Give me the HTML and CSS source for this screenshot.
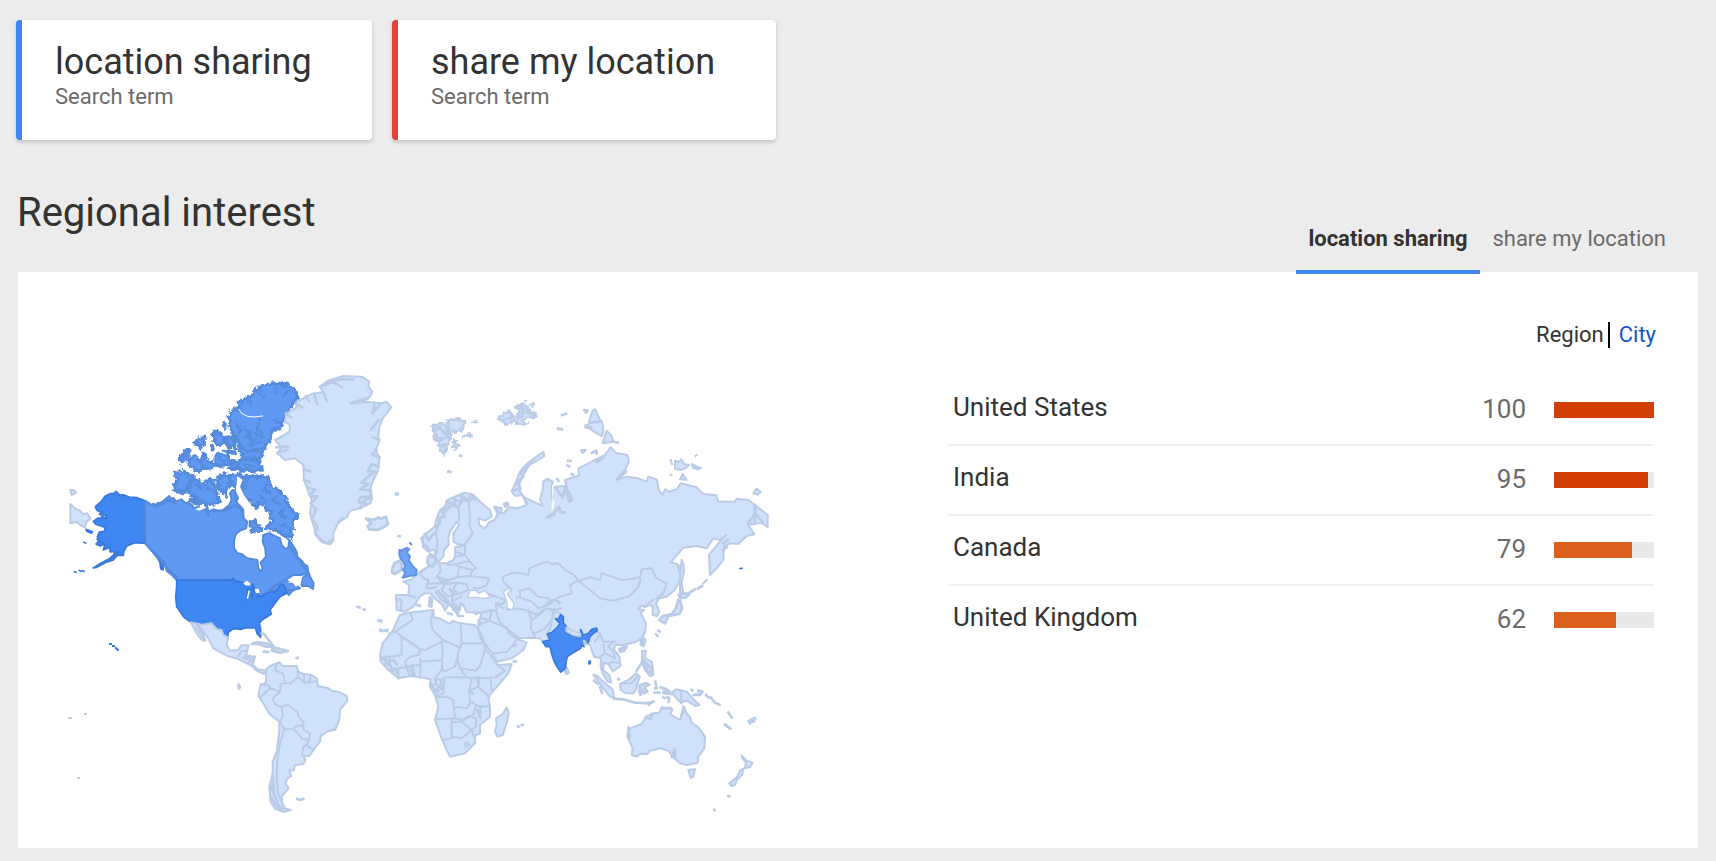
FILE: index.html
```html
<!DOCTYPE html>
<html lang="en">
<head>
<meta charset="utf-8">
<title>Regional interest</title>
<link rel="stylesheet" href="styles.css">
</head>
<body>
<div class="terms">
  <div class="term term-blue"><div class="term-name">location sharing</div><div class="term-kind">Search term</div></div>
  <div class="term term-red"><div class="term-name">share my location</div><div class="term-kind">Search term</div></div>
</div>
<div class="head">
  <h1 class="title">Regional interest</h1>
  <div class="tabs"><div class="tab tab-on">location sharing</div><div class="tab">share my location</div></div>
</div>
<div class="panel">
  <svg class="map" viewBox="0 0 740 480" width="740" height="480">
    <defs>
      <filter id="ragged" x="-5%" y="-5%" width="110%" height="110%">
        <feTurbulence type="fractalNoise" baseFrequency=".09" numOctaves="2" seed="4" result="n"/>
        <feDisplacementMap in="SourceGraphic" in2="n" scale="20" xChannelSelector="R" yChannelSelector="G"/>
      </filter>
    </defs>
    <!-- Alaska and far east Siberia -->
    <g transform="translate(10 18) scale(.33333)">
      <path class="land" d="M31 402L45 415L60 422L68 432L82 430L92 446L80 455L74 472L60 465L52 456L31 460ZM31 360L42 360L48 368L35 375Z" stroke-width="4"/>
      <path class="us" d="M255 392L232 383L208 381L190 374L180 376L168 364L162 371L150 371L135 379L125 393L106 410L110 420L125 428L118 433L137 436L138 443L112 445L100 454L108 463L122 468L135 472L133 484L118 486L112 500L117 512L108 522L120 528L135 522L130 540L150 532L150 546L165 544L160 556L148 566L125 578L100 594L110 592L138 577L160 570L172 556L190 556L192 543L200 528L225 518L257 520L272 530L290 525L304 548L318 566L316 580L308 575L310 600L302 596L300 578L290 560L272 540L257 522Z"/>
      <path class="us" d="M78 478L98 485L94 490L80 484ZM72 517L77 519M43 605L48 607M58 601L62 604M67 602L72 604"/>
      <path class="usin" d="M272 530l20 14l10 20l8 14M150 568l18 -14l10 -8M112 508l12 8l10 8M126 440l14 6"/>
    </g>
    <!-- Canada and Greenland -->
    <g transform="translate(110 18) scale(.33333)">
      <path class="ca" d="M-45 392L-22 406L-12 410L-8 400L5 397L28 378L32 386L40 384L48 394L65 388L72 396L95 403L100 412L118 418L142 410L145 425L160 418L185 425L195 415L207 406L215 390L210 370L218 360L230 362L236 382L228 395L240 408L250 420L250 445L262 455L258 475L240 482L228 492L222 510L222 535L232 550L245 552L262 565L292 570L295 595L302 605L308 595L302 578L318 560L316 535L308 515L310 495L325 490L335 493L360 505L365 525L375 537L385 533L388 510L398 525L410 545L412 560L425 572L432 582L442 588L445 606L425 615L400 615L375 631L386 636L400 640L420 655L400 660L386 675L378 660L370 643L362 643L355 660L330 664L315 670L293 690L288 682L286 660L270 665L262 645L245 637L218 630L50 630L36 615L20 603L15 580L0 562L-20 545L-43 522Z"/>
      <path class="cain" d="M-20 402l14 4l16 -6M18 392l18 2l12 8M110 412l30 10l6 14M160 424l40 -4l24 -14l20 12l6 22M-10 560l16 16l16 20l18 14l12 16M392 530l18 30l18 26l12 16M330 660l30 -24l16 -6M225 370l4 24M384 660l16 0"/>
      <g filter="url(#ragged)">
        <path class="ca isle" d="M46 307L72 304L80 310L96 320L98 330L82 345L78 360L60 370L50 362L42 355L50 335ZM98 330L112 332L130 342L148 330L163 328L158 342L168 352L172 378L180 398L160 402L130 404L102 400L88 392L110 382L92 372L82 366L90 350ZM174 320L190 315L208 318L208 350L195 360L200 375L188 370L178 352L172 340ZM214 318L240 312L246 322L232 340L225 350L214 340Z"/>
        <path class="ca isle" d="M250 322L290 318L322 322L330 340L350 360L376 378L380 400L398 420L412 438L398 450L402 470L392 480L395 505L375 496L360 490L348 478L330 480L318 472L340 452L330 440L335 425L320 418L312 400L296 400L290 415L270 392L250 380L242 360ZM268 460L285 452L305 480L280 486Z"/>
        <path class="ca isle" d="M236 102L250 88L280 72L290 58L310 44L360 40L385 44L402 58L412 80L398 105L385 125L368 160L358 175L335 182L334 205L318 225L310 245L300 265L250 262L236 240L240 220L230 210L218 190L210 170L208 140L224 114L238 122Z"/>
        <path class="ca isle" d="M236 274L255 264L300 277L308 295L290 303L260 300L236 300ZM214 274L226 272L228 298L214 298ZM165 258L185 250L205 258L208 283L195 288L165 285ZM196 202L212 200L224 215L226 233L210 232L200 222ZM159 184L172 184L193 205L190 220L172 224L162 210ZM104 218L114 208L132 202L133 225L120 232ZM59 265L74 246L85 238L90 246L80 260L65 278ZM92 262L105 258L125 275L132 250L145 275L157 280L155 293L130 296L118 304L90 288L84 276ZM188 160L192 157L195 175ZM154 230L160 238L157 240Z"/>
        <path class="cain" d="M260 85l12 18M300 60l8 20M350 52l2 20M385 62l-14 14M250 170l18 16l-12 16l30 6l22 -18M270 225l30 -10l26 4M260 245l48 -6M225 160l18 22l-6 16M340 150l20 8M300 150l-10 25l18 14M280 190l30 10M268 190l10 30M262 330l-8 24M320 345l-10 16l26 10M350 380l-14 12l26 12M370 420l-14 10l24 14M380 470l-20 -6M300 380l26 14M110 345l14 14M140 352l18 10M100 392l30 0M60 315l-4 20M120 270l10 22M178 266l14 10M256 284l30 6"/>
      </g>
      <path class="seam" d="M236 118Q250 150 308 138"/>
      <path class="ca" d="M188 242L225 244L228 253L205 248ZM234 226L250 230L252 238L242 238ZM424 628L446 608L450 620L461 640L459 657L445 648L425 648Z"/>
      <path class="sea" d="M104 417L135 408L138 414L118 422ZM165 412L192 408L194 414ZM382 638L404 628L420 624L428 616L422 640L408 650L398 638ZM248 640L262 632L275 646L262 652Z"/>
      <path class="sea" d="M232 318L248 330L240 350L252 375L268 398L262 412L240 388L228 365Z"/>
      <path class="land" d="M345 210L368 198L388 185L390 165L374 155L380 130L410 112L408 98L455 72L490 66L480 50L505 32L550 18L605 20L628 35L625 50L637 65L632 78L622 86L580 100L620 95L662 100L680 96L694 112L668 145L658 170L655 200L658 215L646 240L658 262L655 300L640 330L632 350L636 385L630 400L600 415L570 422L562 440L535 458L520 490L520 512L510 524L480 512L468 490L460 465L450 430L455 390L445 365L432 330L430 285L405 265L375 270L352 250L365 232Z"/>
      <path class="fine" d="M490 66l10 26M462 72l10 30M438 78l8 14M408 100l18 12M378 132l16 10M480 50l40 -14l26 16M510 34l30 -6l40 0M572 100l50 -16M588 98l34 -12M645 100l-8 30l25 -28M655 150l-20 28M657 210l-18 -8M650 240l-14 14l22 8M655 290l-20 -8l-12 22l22 0l-24 18l-16 16l20 4l-24 16l28 2l4 20l-32 2l-6 14l26 6M432 330l16 6M436 300l14 4M442 352l24 8l-18 16l24 4l-20 20l16 18l-12 30l16 20l-6 24l22 24M350 232l34 -2M352 248l30 -8M600 415l12 -22l18 -10M535 458l12 -14"/>
      <path class="land rough" d="M618 446L640 450L655 442L660 446L678 440L684 462L670 472L652 480L628 478L622 468L634 460ZM708 372l5 1"/>
    </g>
    <!-- United States, Mexico, Central and South America -->
    <g transform="translate(110 188) scale(.33333)">
      <path class="us" d="M50 120L216 120L218 114L226 124L255 129L278 132L284 148L295 152L292 172L310 165L328 157L350 153L358 138L366 133L374 138L380 160L360 170L345 190L330 210L334 222L325 228L306 240L298 250L302 268L302 292L292 282L286 264L255 264L245 268L220 266L204 278L204 290L190 285L185 270L172 268L155 250L125 254L92 246L72 232L50 200L47 170L50 140Z"/>
      <path class="usin" d="M262 150l-2 30M268 148l12 2l-6 20M286 150l14 4"/>
      <path class="sea" d="M250 130L258 124L272 130L270 137L256 136ZM260 175L266 150L270 152L264 178ZM284 148L296 146L300 158L288 160Z"/>
      <path class="land" d="M92 247L125 254L155 250L172 268L185 270L190 285L204 292L200 315L210 332L234 330L244 316L266 316L258 346L285 350L278 374L292 388L318 392L312 402L295 395L272 376L232 356L200 347L160 325L145 295L120 262L110 252L130 285L136 302L125 300L110 280Z"/>
      <path class="line" d="M234 350l12 -18l14 2l-4 20l14 -4M250 354l20 6l14 -10M266 366l14 -2M278 376l8 12M108 262l22 34"/>
      <path class="land rough" d="M275 312L292 306L318 310L342 320L318 320L295 312ZM312 335L324 336M336 328L350 324L384 333L360 338L336 332ZM305 280l10 4M318 290l6 8M328 302l10 14M410 354l3 -1M236 434L240 441L237 446ZM593 200l6 3M612 208l2 1M656 242l8 2M661 270l6 2M676 272l4 1M482 0L500 10L518 0"/>
      <path class="land" d="M318 388L330 378L358 367L368 378L410 378L415 395L430 402L455 405L470 415L474 438L505 445L515 452L535 455L560 468L562 482L540 510L538 540L525 570L505 573L482 588L480 605L460 630L448 648L430 648L436 660L430 672L404 676L402 690L388 692L394 708L382 715L376 730L386 744L366 768L366 790L374 805L392 810L370 816L345 806L332 785L328 740L338 700L338 665L350 635L358 575L358 545L328 522L310 490L295 468L300 440L318 425Z"/>
      <path class="line" d="M302 432L325 436L330 444L312 462L300 472M330 444L360 456L338 475L345 492L365 502L368 530L360 545L372 570L360 610L352 660L350 720L354 760L372 800M350 372L345 390L370 402L375 430L362 432L360 456M375 430L392 430L415 410L412 395M415 410L430 428L470 424M432 405L432 426M452 405L448 426M365 500L384 494L412 516L415 530L432 548L428 556L406 560L400 568L378 568L372 562M428 556L432 570L450 580L448 598L428 598L402 568M448 598L440 612L430 620L426 645M440 616L462 630"/>
      <path class="fine" d="M338 712l4 50l14 36l18 8M332 740l10 20M334 775l14 20l14 14M350 790l12 16M412 777l8 3l10 -3"/>
    </g>
    <!-- Europe and Asia -->
    <g transform="translate(320 108) scale(.33333)">
      <path class="land" d="M158 230L175 215L195 200L198 180L210 150L225 140L232 120L260 108L285 98L310 105L330 125L360 150L365 170L345 182L325 175L328 195L345 206L356 188L375 178L383 162L372 140L395 145L392 160L402 158L418 142L440 145L470 135L462 112L490 125L518 138L510 118L518 90L520 65L532 56L548 65L544 90L548 125L545 95L555 80L585 78L600 100L607 122L602 122L585 60L628 46L625 25L665 5L705 -15L722 -38L740 -20L772 -15L777 5L765 30L738 60L770 50L805 55L830 65L835 50L860 58L867 90L877 105L886 88L895 95L920 88L932 70L980 82L1000 102L1038 105L1045 125L1095 125L1100 116L1135 120L1155 135L1193 165V202L1175 188L1135 195L1153 223L1130 228L1105 252L1080 250L1062 260L1060 300L1040 325L1020 345L1017 285L1045 250L1068 225L1050 240L1030 235L1010 265L980 258L940 263L902 307L922 312L934 325L928 365L912 392L890 410L868 415L858 430L868 455L862 468L848 465L848 440L838 434L828 440L815 436L805 448L822 450L812 460L828 490L826 515L815 535L795 547L760 555L735 555L732 568L748 590L752 618L728 634L715 612L700 608L700 630L718 645L724 668L712 664L698 640L692 620L693 595L672 590L660 555L640 550L590 590L585 625L572 635L555 605L540 560L518 545L510 535L445 533L420 515L410 502L416 520L430 530L445 538L470 548L460 570L425 595L380 605L372 590L345 550L325 505L325 490L330 475L335 458L290 457L280 435L270 430L272 440L264 460L250 450L236 425L205 393L198 396L215 420L237 433L225 452L218 435L190 412L182 400L165 400L150 408L140 425L130 440L105 455L80 450L78 405L115 405L118 375L100 365L125 358L150 335L175 320L173 295L185 282L195 300L197 310L230 310L250 300L256 285L255 262L285 255L262 252L250 245L250 220L268 195L260 185L240 215L235 235L236 255L222 270L220 290L206 305L198 295L193 268L175 275L160 262Z"/>
      <path class="line" d="M198 290L203 250L198 220L205 190L222 160L240 138L265 140L268 180M265 140L280 120L296 125L300 170L298 195L308 220L285 252M296 125L305 118M175 320L160 330L150 340L160 355L175 360L170 385L185 385L200 380M210 318L212 335L200 350L235 360L262 352L268 320L258 312L232 315M200 350L215 365L235 360M170 372L200 370L225 372L262 368L290 372L295 390L265 402L250 385L262 368M225 372L215 390L232 410L248 405L265 402M248 405L245 425L275 410M268 320L308 330L318 325L300 305L285 285L255 290M255 275L285 285L285 252M262 352L300 348L358 355L350 375L330 385L310 385M308 330L300 348M258 312L285 305L300 305"/>
      <path class="line" d="M78 418L95 420L92 450M110 405L135 412M350 400L385 412L405 420L400 432L378 430L380 455M400 445L385 435M335 458L365 450L380 455L388 485L402 500M335 475L358 480L365 455M328 495L358 482L388 495L410 504M372 580L410 575L425 560L440 555M425 560L440 540M412 450L440 445L475 452L485 480L482 505L495 530M475 452L500 465L528 445L560 450M485 480L520 455M495 520L525 505L545 480L555 450L575 445"/>
      <path class="line" d="M420 385L400 365L398 350L430 338L455 340L475 345L478 325L530 305L545 312L565 310L585 330L612 345L625 362L660 352L690 360L695 340L720 348L755 360L778 358L810 352L815 328L845 325L860 355L890 370L880 400L860 415M625 362L600 375L605 400L570 410L545 425L535 415L505 410L478 385L450 392L450 412L440 412M450 412L485 425L505 445L520 440L545 430M555 420L530 430M625 362L660 390L690 415L730 422L780 408L805 380L812 358M530 445L570 460L585 500L610 515L640 530L675 512L690 520L700 545L735 545M550 450L542 500L530 525M675 545L690 525M700 555L705 580L735 595L730 575L715 560L725 550M705 580L690 590M715 612L725 605L745 608M822 442L850 418"/>
      <path class="sea edge" d="M292 412L300 392L318 390L325 400L345 392L362 412L340 415L315 412ZM400 395L415 385L425 388L412 402L432 430L428 450L412 445L410 425Z"/>
      <path class="fine" d="M155 235l6 25M165 222l10 18l16 -18M196 200l14 -10l-8 -16l22 -4l-10 -18l24 -8l-8 -20l26 10l-4 -18l22 12l0 -20l22 12l8 -18l10 16M178 270l-10 -14M176 300l18 -10l-14 -8l16 20M205 395l26 32l18 14M250 430l20 18l-20 -4l12 18M552 165l-22 8l22 -14l14 -18l6 16l12 0M558 85l20 28l6 -28l14 40M700 -6l-20 12M768 35l-22 20M1135 190l20 -30l22 24M1155 135v52M1060 250l14 -10M1060 270l10 -8M924 320l12 36l-6 12M470 130l-10 -20M376 142l10 18M540 425l14 -6l14 8M216 366l24 4M240 388l12 12"/>
      <path class="sea" d="M546 75L551 78L548 115L554 128L550 145L544 155L547 125Z"/>
      <path class="land" d="M425 95L438 65L450 35L470 12L505 -14L520 -24L523 -12L505 0L478 15L460 45L448 70L450 95L458 105L435 108Z"/>
      <path class="fine" d="M428 92l24 -6l-12 -20l20 -16l-8 -12l22 -18l8 -12"/>
      <path class="land rough" d="M402 132l10 -4l2 8l-8 4ZM235 35l4 1M78 102l4 -2M86 228l3 1M174 290l-2 18l14 12l12 -18l-6 -10ZM67 325L74 308L90 302L96 315L92 332L75 342L66 338ZM180 412L186 420L184 440L177 438ZM140 435L150 437M234 460L245 463M265 468L278 468M318 462L326 458"/>
      <path class="uk" d="M88 270L96 272L104 266L112 264L118 268L110 276L120 290L116 300L128 318L140 330L138 345L118 348L98 353L106 338L98 328L106 320L100 305L92 296L88 284ZM120 249l4 4"/>
      <path class="land" d="M930 398L945 408L940 400L935 370L942 335L940 310L935 300L930 345ZM1010 360L1000 370"/>
      <path class="land rough" d="M926 405L942 400L958 402L948 412L932 414ZM930 420L936 445L928 462L895 468L885 490L868 480L878 468L905 462L918 445L924 420ZM955 400L975 388M984 385L996 378M858 523l4 4M865 512l4 3M770 560l-16 4l-4 12l12 -4ZM818 532L826 540L820 558L812 545Z"/>
      <path class="land rough" d="M588 622L596 638L590 642L584 632Z"/>
      <path class="in" d="M556 476L564 478L572 464L580 470L580 488L588 498L588 515L610 528L635 530L632 508L640 525L655 520L665 508L680 504L682 512L670 520L660 530L655 548L645 545L642 560L635 556L632 565L615 575L592 590L588 605L586 625L572 636L562 622L553 605L545 582L540 560L528 560L518 545L540 540L532 522L545 518L562 502L570 490Z"/>
      <path class="nepal" d="M588 502L605 512L632 520L632 530L610 526L588 514ZM640 541L648 545L644 556Z"/>
      <path class="in" d="M657 604L661 603L660 611L657 612Z"/>
      <path class="us" d="M1110 326l6 -1"/>
    </g>
    <!-- Arctic islands -->
    <g transform="translate(370 38) scale(.33333)">
      <g filter="url(#ragged)">
        <path class="land rough" d="M38 108L60 100L74 104L90 125L92 140L80 165L74 195L62 180L56 155L42 145ZM80 92L110 88L135 95L130 115L110 125L92 118ZM100 150L118 165L108 178L100 172ZM232 85L255 70L268 62L272 78L292 80L300 60L288 55L302 42L316 38L318 55L330 62L350 68L345 80L320 82L308 92L322 104L302 104L280 96L258 102L245 92ZM330 44L340 46M158 98L164 93L172 96ZM132 138L140 134L154 136"/>
        <path class="fine" d="M48 110l30 20l10 -26M52 148l24 -2l14 -22M64 170l20 -8M44 118l10 30M240 88l30 -4l20 10M292 84l24 -16l22 4M306 48l4 20"/>
      </g>
      <path class="land rough" d="M120 197l4 1M87 245l4 1M426 75l12 -4M414 116l12 2M492 60L503 62L498 68ZM484 182L496 180L488 188ZM516 188L530 182L530 190M444 212l8 1M443 226l5 3M455 252l4 3M412 268l3 4"/>
      <path class="land" d="M508 90L518 62L526 58L536 82L548 102L550 125L545 138L530 130L508 116L495 112L508 100ZM548 160L560 122L575 138L580 155Z"/>
      <path class="fine" d="M510 98l34 -4M498 106l16 8M584 156l10 2"/>
      <path class="land" d="M752 210L756 222M765 212L775 216L785 208L792 222L808 225L795 235L782 240L765 236ZM815 222L830 230L842 234L835 238L820 234ZM826 198l4 -3M752 254l2 1M788 252L800 270L780 268ZM1000 310L1010 296L1022 306L1012 314Z"/>
    </g>
    <!-- Africa -->
    <g transform="translate(320 238) scale(.33333)">
      <path class="land" d="M90 75L115 68L190 60L192 82L215 88L240 102L248 92L270 100L315 105L325 118L330 140L350 180L375 215L385 225L425 222L415 250L385 285L355 320L360 350L360 380L330 405L330 430L315 437L315 460L285 490L240 500L230 480L215 445L195 390L205 350L195 315L180 290L182 268L150 262L120 258L85 265L55 240L32 215L30 195L38 160L70 120L80 95Z"/>
      <path class="line" d="M122 70L128 90L90 115L78 125L58 130M78 125L95 140L95 195L60 200L32 200M95 140L152 178L145 195L120 200L105 215L110 230M60 200L58 220M190 62L182 90L188 120L222 152L165 180L152 178M222 152L268 172L262 205L255 230L222 245L215 235L218 182L215 155M272 100L275 160L270 175M275 160L338 160M345 180L335 210L330 228L318 242L270 235L262 205M270 235L290 262L300 265L330 262L340 265L375 262L405 242L378 222M150 205L152 230L150 262M152 215L215 210L218 235L195 265L212 270L225 262L265 262L290 262M110 230L118 258M128 225L135 258M85 235L110 230L145 225M85 235L85 265M195 265L200 285L180 282M212 270L215 295L195 315M222 265L220 310L198 320M205 322L230 320L250 330L252 358L262 350L290 355L300 340L298 300L305 270M300 265L322 265L325 290L302 300M325 290L358 320M330 262L325 290M362 265L365 300M252 358L255 385L195 388M255 385L280 390L310 375L318 345L305 335L295 345M318 345L330 350L358 348M330 350L332 385M245 392L245 445L220 450M248 395L275 395L305 420L275 445L245 440M280 390L295 378L318 385L318 410L305 420L312 440M282 462L292 456L298 464L288 470Z"/>
      <path class="fine" d="M34 205l18 10l18 -6l10 14M45 222l16 4l8 16M60 240l16 -4l6 14M120 232l8 22M182 282l14 22l12 -16M326 92l6 10M322 360l6 18M298 300l10 10M45 205l14 16"/>
      <path class="land" d="M378 385L398 372L410 352L416 368L412 392L398 435L382 440L375 425L380 405Z"/>
      <path class="land rough" d="M432 214l5 1M444 409l3 1M456 404l2 1M28 92l4 0M33 122l3 1M48 121l4 -1"/>
    </g>
    <!-- Southeast Asia, Australia, New Zealand -->
    <g transform="translate(520 288) scale(.33333)">
      <path class="land" d="M175 268L188 262L215 252L228 230L250 220L268 218L275 202L308 208L300 222L330 240L335 222L340 198L350 220L360 230L365 248L385 262L405 290L403 325L385 350L383 368L350 375L330 370L310 352L295 332L270 325L240 332L232 342L210 342L200 350L185 345L188 325L172 290Z"/>
      <path class="fine" d="M306 350l8 -24l2 28M228 232l14 6l4 -16M335 225l8 -20M176 262l2 30M275 206l26 -2"/>
      <path class="land" d="M355 390L375 388L370 410L362 414ZM515 346L530 362L548 368L540 382L525 384L528 368L518 356ZM520 386L516 405L500 420L496 434L485 438L478 430L500 412L510 392Z"/>
      <path class="land" d="M70 104L82 108L100 125L128 148L133 175L118 168L100 145L85 125ZM150 132L178 118L198 100L210 110L202 130L200 145L190 160L168 160L152 150ZM305 158L318 148L350 155L365 172L388 195L375 198L350 182L332 188L320 175ZM216 32L228 32L225 55L245 65L248 80L250 105L240 108L225 90L216 65Z"/>
      <path class="line" d="M334 152V190M160 130l24 0l20 -22"/>
      <path class="land rough" d="M132 176L160 178L188 186M196 188l20 1M222 190l20 -2M236 194l14 -10M210 135L228 130L238 134L222 142L232 155L222 160L216 150L212 165L208 155ZM256 125l4 20l-4 0M254 158l14 0M272 142l14 4l12 8l-18 4M285 160l18 2M280 172l4 2M292 172l6 2l-2 12M370 165L390 165L398 155L385 152M408 165l8 8M422 172l8 10M435 188l14 6M475 218l10 14M465 254l16 12M536 244l8 -6l8 6l-8 2l-4 4M552 234l4 2M475 468l3 1M433 509l1 1M72 122l12 10M90 142l6 16M200 92l14 -22M215 0l-2 14M145 117l2 1M148 28l12 -4M365 150l2 1M218 60l20 20l-16 -2l22 28l-2 -26"/>
    </g>
    <!-- Pacific islands -->
    <path class="us dots" d="M60 292h1M63 294h1M66 296l2 2"/>
    <path class="fine dots" d="M19 366h2M35 362h1M28 426h1"/>
  </svg>
  <div class="side">
    <div class="switch"><span class="region">Region</span><a class="city">City</a></div>
    <div class="row"><span class="name">United States</span><span class="num">100</span><span class="bar"><i class="hot" style="width:100%"></i></span></div>
    <div class="row"><span class="name">India</span><span class="num">95</span><span class="bar"><i class="hot" style="width:94%"></i></span></div>
    <div class="row"><span class="name">Canada</span><span class="num">79</span><span class="bar"><i class="warm" style="width:78%"></i></span></div>
    <div class="row"><span class="name">United Kingdom</span><span class="num">62</span><span class="bar"><i class="warm" style="width:62%"></i></span></div>
  </div>
</div>
</body>
</html>
```
FILE: styles.css
```css
* { box-sizing: border-box; }
body { margin: 0; height: 861px; overflow: hidden; padding: 20px 18px 0 16px; background: #ececec; font-family: Roboto, sans-serif; color: #333; }
.terms { display: flex; gap: 20px; height: 120px; }
.term { width: 356px; padding: 21px 0 0 33px; background: #fff; border-left: 6px solid #4285f4; border-radius: 4px; box-shadow: 0 2px 4px rgba(0,0,0,.18); }
.term-red { width: 384px; border-left-color: #e04438; }
.term-name { font-size: 36px; line-height: 42px; }
.term-kind { font-size: 22px; line-height: 28px; color: #6b6b6b; }
.head { display: flex; justify-content: space-between; height: 132px; padding-left: 1px; }
.title { margin: 50px 0 0; font-size: 40px; line-height: 46px; font-weight: 400; }
.tabs { display: flex; height: 134px; padding-right: 20px; position: relative; z-index: 1; }
.tab { padding: 85px 12px 0; font-size: 22px; line-height: 28px; color: #6b6b6b; }
.tab-on { font-weight: 700; color: #333; border-bottom: 4px solid #4285f4; width: 184px; }
.panel { display: flex; justify-content: space-between; margin-left: 2px; height: 576px; padding: 48px 44px 0 32px; background: #fff; }
.map { margin-top: 32px; }
.side { width: 706px; }
.switch { display: flex; justify-content: flex-end; margin-right: -2px; height: 56px; font-size: 22px; line-height: 32px; }
.region { height: 26px; margin: 2px 9px 0 0; padding-right: 4px; line-height: 26px; border-right: 2px solid #000; }
.city { line-height: 30px; color: #1155cc; }
.row { display: flex; height: 70px; padding-left: 5px; border-bottom: 2px solid #eef1f5; font-size: 26px; line-height: 30px; }
.row:last-child { border: 0; }
.name { flex: 1; padding-top: 16px; }
.num { padding-top: 18px; color: #6b6b6b; }
.bar { width: 100px; height: 16px; margin: 26px 0 0 28px; background: #e9e9e9; }
.bar i { display: block; height: 100%; }
.hot { background: #d13f07; }
.warm { background: #dc5f1c; }
.map path { stroke-linejoin: round; stroke-linecap: square; }
.land { fill: #d0e1fc; stroke: #bacbe6; stroke-width: 6; }
.line { fill: none; stroke: #bacbe6; stroke-width: 6; }
.fine { fill: none; stroke: #bacbe6; stroke-width: 8; }
.rough { stroke-width: 8; }
.us { fill: #3e86f1; stroke: #3878da; stroke-width: 5; }
.usin { fill: none; stroke: #3878da; stroke-width: 6; }
.ca { fill: #5f99f3; stroke: #558ada; stroke-width: 6; }
.isle { stroke-width: 10; }
.cain { fill: none; stroke: #558ada; stroke-width: 7; }
.seam { fill: none; stroke: #fff; stroke-width: 3; }
.uk { fill: #6fa3f5; stroke: #6394dd; stroke-width: 6; }
.in { fill: #468af3; stroke: #3c7bdb; stroke-width: 5; }
.nepal { fill: #d0e1fc; stroke: #bacbe6; stroke-width: 4; }
.sea { fill: #fff; }
.edge { stroke: #bacbe6; stroke-width: 4; }
.map .dots { stroke-width: 2; }
```
